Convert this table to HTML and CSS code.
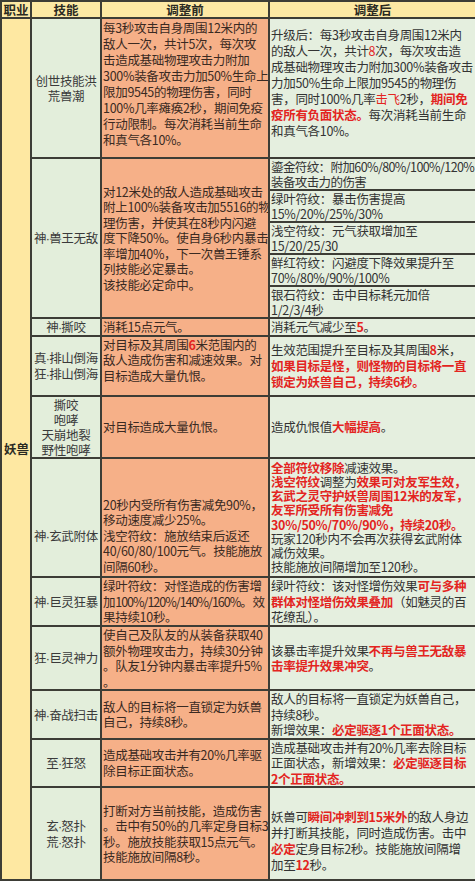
FILE: index.html
```html
<!DOCTYPE html>
<html lang="zh-CN">
<head>
<meta charset="utf-8">
<title>妖兽技能调整</title>
<link rel="stylesheet" href="styles.css">
</head>
<body>
<table class="sheet">
  <colgroup>
    <col class="c-job"><col class="c-skill"><col class="c-before"><col class="c-after">
  </colgroup>
  <thead>
    <tr class="r-head">
      <th>职业</th><th>技能</th><th>调整前</th><th>调整后</th>
    </tr>
  </thead>
  <tbody>
    <tr class="r1">
      <td class="job" rowspan="15">妖兽</td>
      <td class="skill">创世技能洪<br>荒兽潮</td>
      <td class="before lh16 top">每3秒攻击自身周围12米内的<br>敌人一次，共计5次，每次攻<br>击造成基础物理攻击力附加<br>300%装备攻击力加50%生命上<br>限加9545的物理伤害，同时<br>100%几率瘫痪2秒，期间免疫<br>行动限制。每次消耗当前生命<br>和真气各10%。</td>
      <td class="after lh16 lift">升级后：每3秒攻击自身周围12米内<br>的敌人一次，共计<span class="red">8</span>次，每次攻击造<br>成基础物理攻击力附加300%装备攻击<br>力加50%生命上限加9545的物理伤<br>害，同时100%几率<span class="red">击飞</span>2秒，<b class="red">期间免<br>疫所有负面状态。</b>每次消耗当前生命<br>和真气各10%。</td>
    </tr>
    <tr class="r2a">
      <td class="skill" rowspan="5">神<span class="dot">·</span>兽王无敌</td>
      <td class="before" rowspan="5">对12米处的敌人造成基础攻击<br>附上100%装备攻击加5516的物<br>理伤害，并使其在8秒内闪避<br>度下降50%。使自身6秒内暴击<br>率增加40%，下一次兽王锤系<br>列技能必定暴击。<br>该技能必定命中。</td>
      <td class="after sub squeeze">鎏金符纹：附加60%/80%/100%/120%<br>装备攻击力的伤害</td>
    </tr>
    <tr class="r2b"><td class="after sub">绿叶符纹：暴击伤害提高<br>15%/20%/25%/30%</td></tr>
    <tr class="r2c"><td class="after sub">浅空符纹：元气获取增加至<br>15/20/25/30</td></tr>
    <tr class="r2d"><td class="after sub">鲜红符纹：闪避度下降效果提升至<br>70%/80%/90%/100%</td></tr>
    <tr class="r2e"><td class="after sub">银石符纹：击中目标耗元加倍<br>1/2/3/4秒</td></tr>
    <tr class="r3">
      <td class="skill">神<span class="dot">·</span>撕咬</td>
      <td class="before">消耗15点元气。</td>
      <td class="after">消耗元气减少至<b class="red">5</b>。</td>
    </tr>
    <tr class="r4">
      <td class="skill">真<span class="dot">·</span>排山倒海<br>狂<span class="dot">·</span>排山倒海</td>
      <td class="before raise">对目标及其周围<b class="red">6</b>米范围内的<br>敌人造成伤害和减速效果。对<br>目标造成大量仇恨。</td>
      <td class="after lh16">生效范围提升至目标及其周围<b class="red">8</b>米，<br><b class="red">如果目标是怪，则怪物的目标将一直<br>锁定为妖兽自己，持续6秒。</b></td>
    </tr>
    <tr class="r5">
      <td class="skill lh15">撕咬<br>咆哮<br>天崩地裂<br>野性咆哮</td>
      <td class="before">对目标造成大量仇恨。</td>
      <td class="after">造成仇恨值<b class="red">大幅提高</b>。</td>
    </tr>
    <tr class="r6">
      <td class="skill sink">神<span class="dot">·</span>玄武附体</td>
      <td class="before sink">20秒内受所有伤害减免90%，<br>移动速度减少25%。<br>浅空符纹：施放结束后返还<br>40/60/80/100元气。技能施放<br>间隔60秒。</td>
      <td class="after tight"><b class="red">全部符纹移除</b>减速效果。<br><b class="red">浅空符纹</b>调整为<b class="red">效果可对友军生效，<br>玄武之灵守护妖兽周围12米的友军，<br>友军所受所有伤害减免<br>30%/50%/70%/90%，持续20秒。</b><br>玩家120秒内不会再次获得玄武附体<br>减伤效果。<br>技能施放间隔增加至120秒。</td>
    </tr>
    <tr class="r7">
      <td class="skill">神<span class="dot">·</span>巨灵狂暴</td>
      <td class="before">绿叶符纹：对怪造成的伤害增<br>加<span class="nums">100%/120%/140%/160%</span>。效<br>果持续10秒。</td>
      <td class="after">绿叶符纹：该对怪增伤效果<b class="red">可与多种<br>群体对怪增伤效果叠加</b>（如魅灵的百<br>花缭乱）。</td>
    </tr>
    <tr class="r8">
      <td class="skill">狂<span class="dot">·</span>巨灵神力</td>
      <td class="before">使自己及队友的从装备获取40<br>额外物理攻击力，持续30分钟<br>。队友1分钟内暴击率提升5%<br>。</td>
      <td class="after">该暴击率提升效果<b class="red">不再与兽王无敌暴<br>击率提升效果冲突</b>。</td>
    </tr>
    <tr class="r9">
      <td class="skill">神<span class="dot">·</span>奋战扫击</td>
      <td class="before">敌人的目标将一直锁定为妖兽<br>自己，持续8秒。</td>
      <td class="after">敌人的目标将一直锁定为妖兽自己，<br>持续8秒。<br>新增效果：<b class="red">必定驱逐1个正面状态。</b></td>
    </tr>
    <tr class="r10">
      <td class="skill">至<span class="dot">·</span>狂怒</td>
      <td class="before">造成基础攻击并有20%几率驱<br>除目标正面状态。</td>
      <td class="after">造成基础攻击并有20%几率去除目标<br>正面状态，新增效果：<b class="red">必定驱逐目标<br>2个正面状态。</b></td>
    </tr>
    <tr class="r11">
      <td class="skill">玄<span class="dot">·</span>怒扑<br>荒<span class="dot">·</span>怒扑</td>
      <td class="before">打断对方当前技能，造成伤害<br>。击中有50%的几率定身目标3<br>秒。施放技能获取15点元气。<br>技能施放间隔8秒。</td>
      <td class="after lh16 drop">妖兽可<b class="red">瞬间冲刺到15米外</b>的敌人身边<br>并打断其技能，同时造成伤害。击中<br><b class="red">必定</b>定身目标2秒。技能施放间隔增<br>加至<b class="red">12</b>秒。</td>
    </tr>
  </tbody>
</table>
</body>
</html>
```

FILE: styles.css
```css
html, body {
  margin: 0;
  padding: 0;
  background: #f3f6ef;
}

.sheet {
  width: 475px;
  border-collapse: collapse;
  table-layout: fixed;
  font-family: "Noto Sans CJK SC", "Noto Sans", sans-serif;
  font-size: 12.5px;
  line-height: 15.5px;
  letter-spacing: -0.3px;
  color: #333;
}

.c-job { width: 30px; }
.c-skill { width: 70px; }
.c-before { width: 168px; }
.c-after { width: 207px; }

.sheet th,
.sheet td {
  border: 2px solid #3d3d36;
  padding: 0 0 0 1px;
  vertical-align: middle;
  white-space: nowrap;
  overflow: hidden;
}

.sheet th {
  background: #fde9a4;
  font-weight: bold;
  font-size: 12.5px;
  line-height: 14px;
  letter-spacing: 0;
  color: #2a2a22;
  text-align: center;
  padding: 0;
}

.r-head { height: 17px; }

.job {
  background: #fee8a2;
  font-weight: bold;
  font-size: 12.5px;
  letter-spacing: 0;
  color: #2a2a22;
  text-align: center;
}

.sheet td.skill {
  background: #e3eedb;
  text-align: center;
  color: #3a3a3a;
  padding: 0;
}

.dot {
  font-family: "Liberation Sans", sans-serif;
  line-height: 8px;
  margin: 0 -0.5px;
}

.before {
  background: #f6b088;
  color: #3a2a22;
}

.after {
  background: #e5efdf;
  color: #333;
}

.squeeze { letter-spacing: -0.6px; }
.nums { letter-spacing: -1px; }

.lh16 { line-height: 16px; }
.lh15 { line-height: 15px; }

.sheet td.top {
  vertical-align: top;
  padding-top: 1px;
}

.sheet td.lift { padding-bottom: 10px; }
.sheet td.raise { padding-bottom: 12px; }
.sheet td.sink { padding-top: 36px; }
.sheet td.drop { padding-top: 14px; }

.sub { line-height: 15px; }
.tight { line-height: 14.2px; }

.red { color: #e3251f; }
b.red { font-weight: bold; }

.r1 { height: 140px; }
.r2a, .r2b, .r2c, .r2d { height: 32px; }
.r2e { height: 29px; }
.r3 { height: 17px; }
.r4 { height: 60px; }
.r5 { height: 62px; }
.r6 { height: 119px; }
.r7 { height: 49px; }
.r8 { height: 62px; }
.r9 { height: 47px; }
.r10 { height: 47px; }
.r11 { height: 93px; }
```
